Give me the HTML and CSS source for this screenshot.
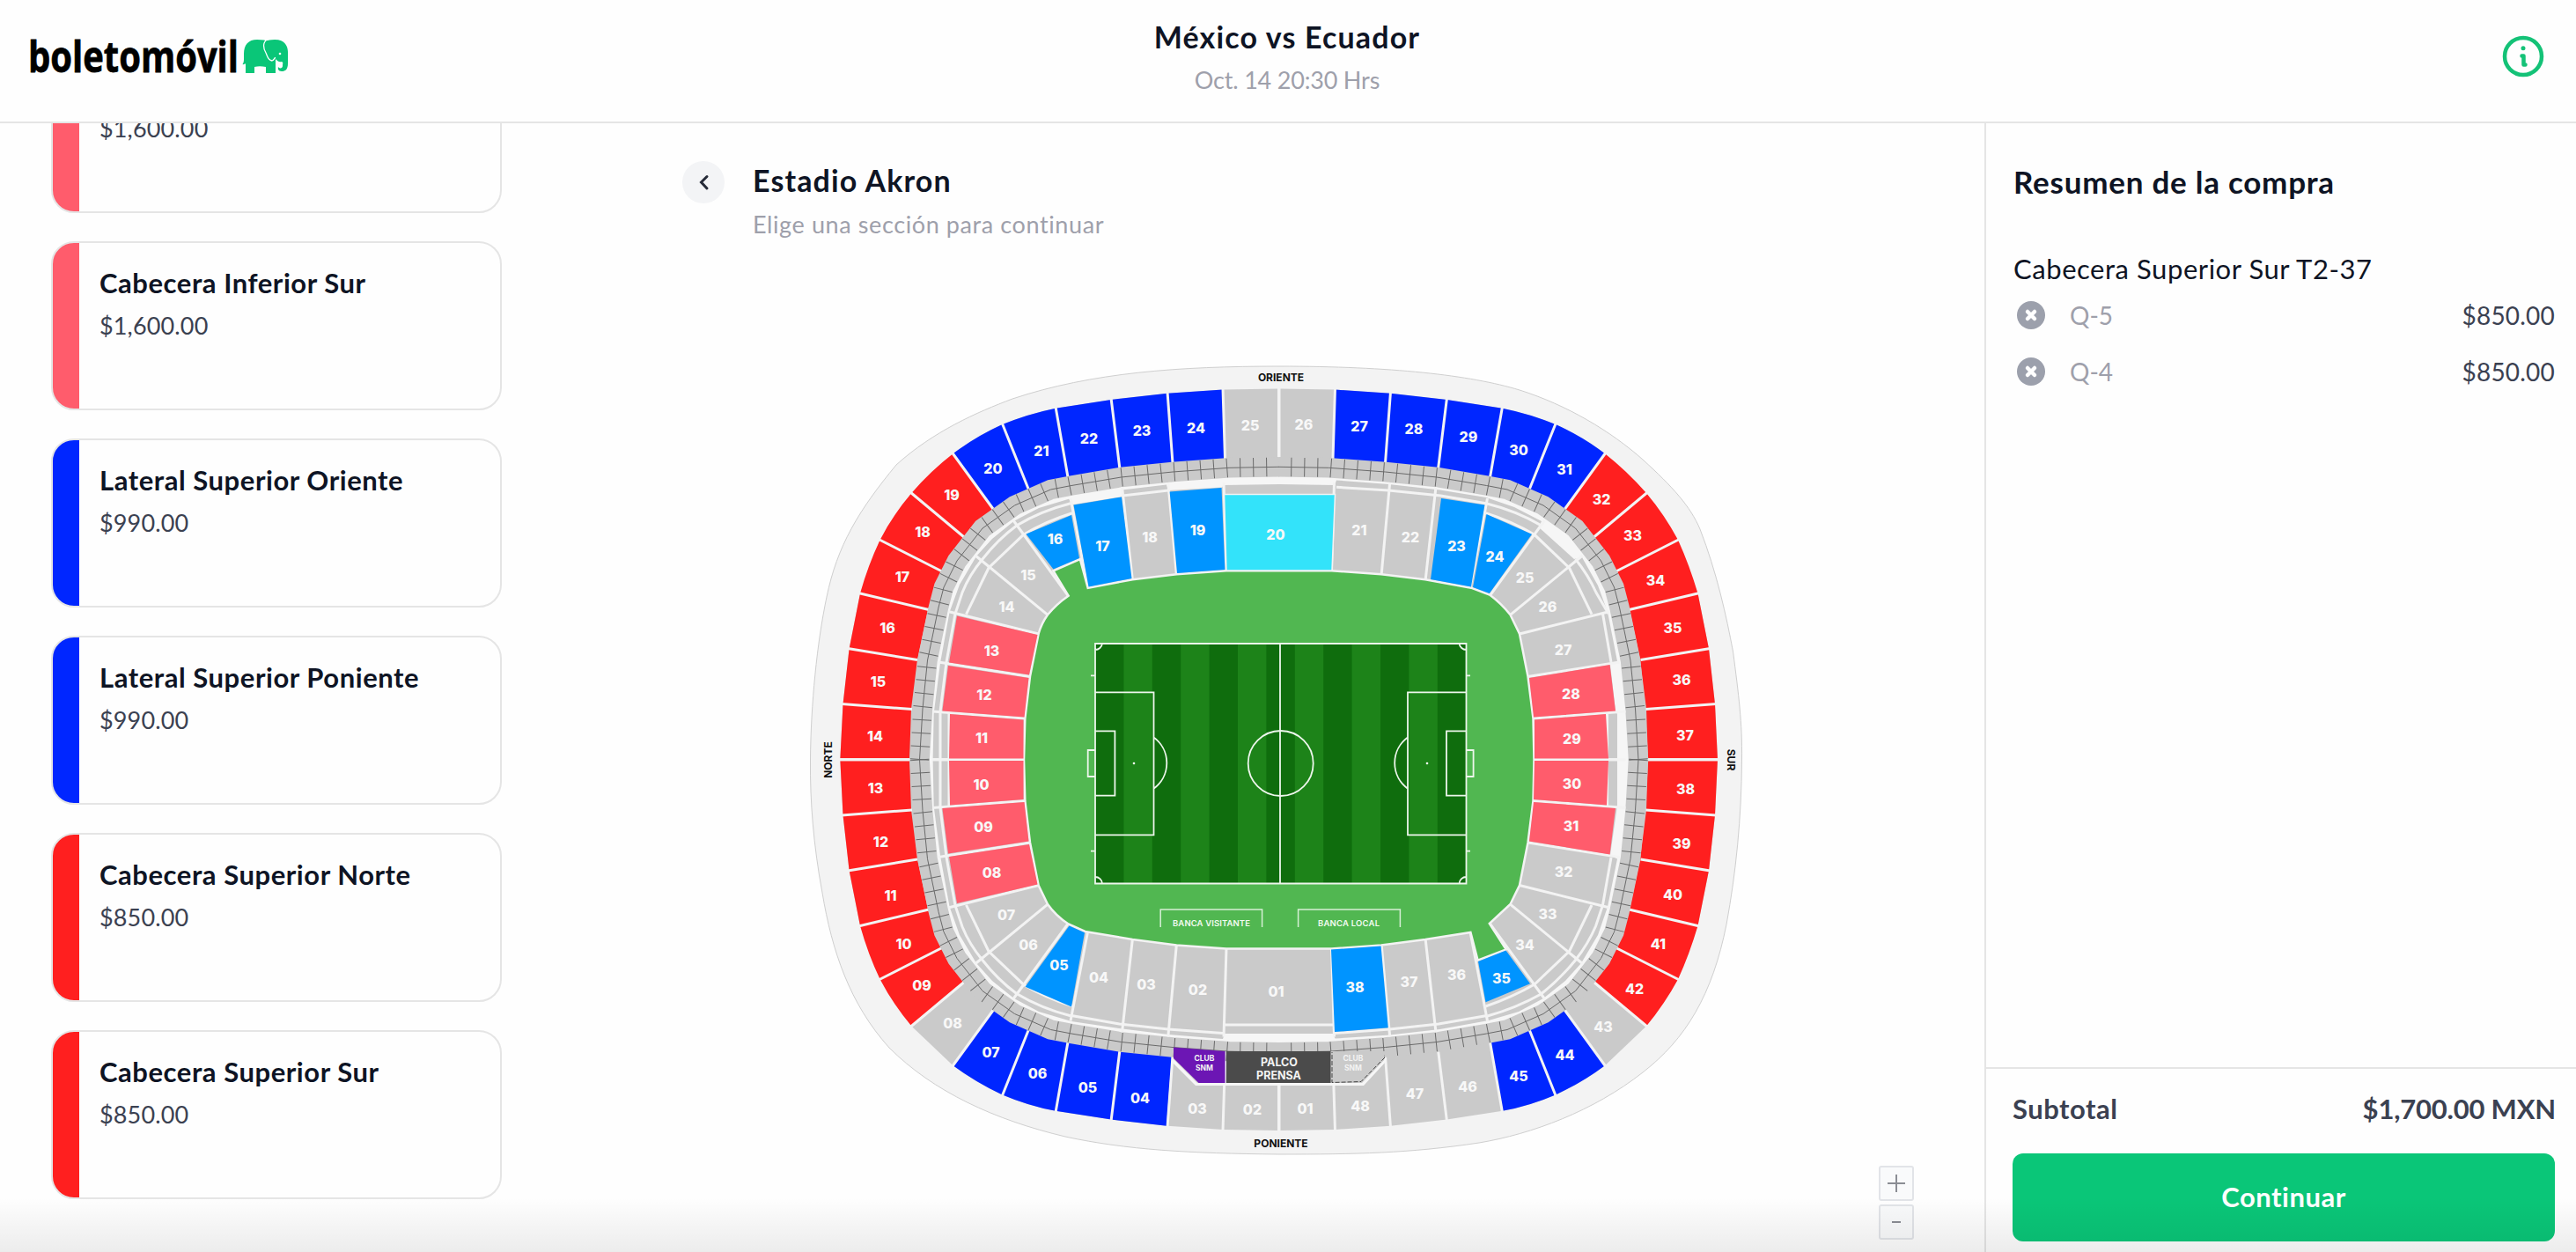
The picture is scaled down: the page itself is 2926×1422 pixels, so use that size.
FILE: index.html
```
<!DOCTYPE html>
<html lang="es">
<head>
    <meta charset="UTF-8">
    <title>México vs Ecuador | boletomóvil</title>
    <link rel="stylesheet" href="styles.css">
</head>
<body>
<header class="header">
    <a class="logo">
        <svg class="logo-svg" width="294" height="50" viewBox="34 38 294 50">
            <text class="logo-text" x="32" y="82" textLength="239" lengthAdjust="spacingAndGlyphs">boletomóvil</text>
            <!-- elefante -->
            <path fill="#0ac678" d="M275.500 73C277.500 71 277 66 277 61C277 51 282 45 292 45L300 45.500C303 47 305 45 312 45C324 45 327 53 327 59V72C327 79 324 81 320 81C316 81 315.500 78 316 76C317 78 321 78 321 75C321 72 322 71 320 70C317 71 315 69 313 67V83H302V76C297 75 293 75 289 76V83H279V73C278.500 71 277.500 74 275.500 73Z"/>
            <path fill="none" stroke="#fff" stroke-width="1.3" d="M303.500 45C298 48 299 55 302 60C304 64 304 68 309 69C312 68 311 66 313 65.500"/>
            <circle cx="318" cy="61" r="1.3" fill="#fff"/>
        </svg>
    </a>
    <div class="event">
        <h1 class="event-name">México vs Ecuador</h1>
        <p class="event-date">Oct. 14 20:30 Hrs</p>
    </div>
    <a class="info">
        <svg width="48" height="48" viewBox="0 0 48 48" fill="none" stroke="#14c277">
            <circle cx="24" cy="24" r="21" stroke-width="4.5"/>
            <path stroke-width="4.5" stroke-linecap="round" stroke-linejoin="round" d="M22.500 23.500H24.500V33.500H26.500"/>
            <circle cx="24" cy="14.700" r="2.500" fill="#14c277" stroke="none"/>
        </svg>
    </a>
</header>

<main class="content">
    <!-- zonas -->
    <aside class="zones">
        <div class="zone pink first"><p>$1,600.00</p></div>
        <div class="zone pink"><h3>Cabecera Inferior Sur</h3><p>$1,600.00</p></div>
        <div class="zone blue"><h3>Lateral Superior Oriente</h3><p>$990.00</p></div>
        <div class="zone blue"><h3>Lateral Superior Poniente</h3><p>$990.00</p></div>
        <div class="zone red"><h3>Cabecera Superior Norte</h3><p>$850.00</p></div>
        <div class="zone red"><h3>Cabecera Superior Sur</h3><p>$850.00</p></div>
    </aside>

    <!-- mapa -->
    <section class="venue">
        <div class="venue-head">
            <a class="back">
                <svg width="48" height="48" viewBox="0 0 48 48">
                    <circle cx="24" cy="24" r="24" fill="#f3f4f6"/>
                    <path d="M28 17.500L21.500 24L28 31" fill="none" stroke="#262b38" stroke-width="3" stroke-linecap="round"/>
                </svg>
            </a>
            <div>
                <h2 class="venue-name">Estadio Akron</h2>
                <p class="venue-hint">Elige una sección para continuar</p>
            </div>
        </div>

        <svg class="map" width="1080" height="910" viewBox="910 408 1080 910">
            <defs>
                <!-- un cuarto de las divisiones, se repite en espejo -->
                <g id="rows">
                    <path d="M1453 440V520M1389 441L1391.500 521M1326 445L1332 526M1262 452L1272 533M1199 462L1213 542M1138 480L1168 555M1081.500 514L1128 578M1034 559L1095 610M998 612.500L1070 649M975 673.500L1055 692.500M963 736.500L1042 749.500M956 799.500L1036 805.500M952 862.700H1034"/>
                </g>
                <g id="aisles">
                    <path d="M1390 548L1393 649M1326.800 548L1336.400 653M1274.500 553L1286.400 659M1216 566L1235.700 668M1151 591L1213.600 677M1108 631L1190 698.300M1077 694.500L1179.600 720M1066 752L1170 768.500M1059 808L1164.300 816M1059 862.700H1163"/>
                </g>
                <g id="corner">
                    <path d="M1068 863V808L1075 752L1085 697L1093 673Q1101 653 1116 635Q1133 613 1155 596.700Q1183 580 1216 571.700"/>
                    <path d="M1097.500 697.700L1123 645L1162.500 607.300Q1188 592 1218 582.700"/>
                </g>
                <path id="halfband" d="M1044.500 863L1048 805L1053.500 750L1066 690L1072 667L1087 637L1116 600L1152.500 574L1193.500 556L1217 551.500L1273.500 542L1332 536L1396 531.300L1453 530.300"/>
                <g id="band">
                    <use href="#halfband"/>
                    <use href="#halfband" transform="matrix(-1 0 0 1 2905.500 0)"/>
                    <use href="#halfband" transform="matrix(1 0 0 -1 0 1725.500)"/>
                    <use href="#halfband" transform="matrix(-1 0 0 -1 2905.500 1725.500)"/>
                </g>
            </defs>

            <!-- explanada -->
            <path class="shell" d="M920.500 863C921 800 928 730 939 678C951 620 975 580 1018 528C1060 490 1110 468 1150 453C1240 423 1340 416 1453 416C1580 416 1670 426 1726 443C1780 460 1830 490 1866 522C1900 553 1920 575 1931 601C1950 650 1961 700 1968.500 740C1975 790 1979 820 1978.500 863C1978 930 1972 990 1961 1050C1945 1130 1915 1180 1866 1218C1810 1262 1740 1288 1680 1298C1600 1310 1540 1311 1453 1311C1350 1310 1280 1306 1210 1291C1130 1272 1060 1240 1010 1190C965 1140 945 1080 934 1014C924 960 920 910 920.500 863Z"/>

            <!-- anillo superior -->
            <path class="off" d="M954.300 863L957.500 799.700L964.600 736.700L977 674L999.600 613.300L1035.400 560L1082.500 515.300Q1108 496 1138 482.300Q1168 470 1199 463.700L1262 454L1326 446.700L1389 442.500L1453 441.500L1516.500 442.500L1579.500 446.700L1643.500 454L1706.500 463.700Q1738 470 1767.500 482.300Q1798 496 1823 515.300L1870 560L1906 613.300L1928.500 674L1941 736.700L1948 799.700L1951 863L1948 925.800L1941 988.800L1928.500 1051.500L1906 1112.200L1870 1165.500L1823 1210.200Q1798 1229 1767.500 1243.200Q1738 1256 1706.500 1261.800L1643.500 1271.500L1579.500 1278.800L1516.500 1283L1453 1284L1389 1283L1326 1278.800L1262 1271.500L1199 1261.800Q1168 1256 1138 1243.200Q1108 1229 1082.500 1210.200L1035.400 1165.500L999.600 1112.200L977 1051.500L964.600 988.800L957.500 925.800Z"/>
            <path class="red" d="M1033 863H954.300L957.500 799.700L964.600 736.700L977 674Q986 642 999.600 613.300Q1014 585 1035.400 560Q1057 535 1082.500 515.300L1130 580L1095 609L1069 648L1054 692L1042 749L1035 805Z"/>
            <path class="red" d="M1872 863H1951L1948 799.700L1941 736.700L1928.500 674Q1919 642 1906 613.300Q1891 585 1870 560Q1848 535 1823 515.300L1776 580L1810 609L1836 648L1851 692L1863 749L1870 805Z"/>
            <path class="red" d="M1033 862H954.300L957.500 925.800L964.600 988.800L977 1051.500Q986 1084 999.600 1112.200Q1014 1140 1035.400 1165.500L1096 1115L1069 1077L1054 1033L1042 976L1035 920Z"/>
            <path class="red" d="M1872 862H1951L1948 925.800L1941 988.800L1928.500 1051.500Q1919 1084 1906 1112.200Q1891 1140 1870 1165.500L1809 1115L1836 1077L1851 1033L1863 976L1870 920Z"/>
            <path class="blue" d="M1082.500 515.300Q1108 496 1138 482.300Q1168 470 1199 463.700L1262 454L1326 446.700L1389 442.500L1391.500 522L1213 545L1130 580Z"/>
            <path class="blue" d="M1823 515.300Q1798 496 1767.500 482.300Q1738 470 1706.500 463.700L1643.500 454L1579.500 446.700L1516.500 442.500L1514 522L1692 545L1776 580Z"/>
            <path class="blue" d="M1082.500 1210.200Q1108 1229 1138 1243.200Q1168 1256 1199 1261.800L1262 1271.500L1325 1278.800L1331 1199L1213 1181L1130 1146Z"/>
            <path class="blue" d="M1823 1210.200Q1798 1229 1767.500 1243.200Q1738 1256 1706.500 1261.800L1692.500 1181L1776 1146Z"/>
            <g class="gap">
                <use href="#rows"/>
                <use href="#rows" transform="matrix(-1 0 0 1 2905.500 0)"/>
                <use href="#rows" transform="matrix(1 0 0 -1 0 1725.500)"/>
                <use href="#rows" transform="matrix(-1 0 0 -1 2905.500 1725.500)"/>
            </g>

            <!-- palcos -->
            <path fill="#f6f6f6" d="M1044.500 863L1048 805L1053.500 750L1066 690L1087 637L1116 600L1152.500 574L1193.500 556L1332 536L1453 530L1573.500 536L1712 556L1753 574L1789.500 600L1818.500 637L1839.500 690L1852 750L1857.500 805L1861 863L1857.500 920L1852 975L1839.500 1035L1818.500 1088L1789.500 1125L1753 1151L1712 1169L1573.500 1189L1453 1195L1332 1189L1193.500 1169L1152.500 1151L1116 1125L1087 1088L1066 1035L1053.500 975L1048 920Z"/>
            <use href="#band" class="band"/>
            <use href="#band" class="band-ticks"/>
            <use href="#band" class="band-mid"/>

            <!-- anillo inferior -->
            <path class="off" d="M1059.600 863L1060.700 810L1068 753L1078.600 695L1090 664L1109 631.700L1127 612L1151.800 591.700L1180 577L1214 566.700L1219 573L1274.500 564V556.500L1325 550.500L1327 557L1388 553.500L1390 551L1453 550L1516 551L1518 545.500L1577.500 550L1635.500 556.500L1688 565L1720 576L1751 592L1748 599L1788 635L1797 633L1815 665L1826 695L1837 751L1829 755L1835 807L1837 811V915L1829 971L1837 975.500L1826 1030L1815 1062L1796 1094L1778 1114L1753 1134L1725 1149L1691 1159L1635.500 1169L1578.500 1175.500L1516.500 1179.500L1514 1174H1391L1389 1180L1327.500 1175L1271 1168L1217 1160L1180 1149L1151.800 1134L1127 1114L1109 1094L1090 1062L1078.600 1030L1068 972L1060.700 916Z"/>
            <g class="gap">
                <use href="#aisles"/>
                <use href="#aisles" transform="matrix(-1 0 0 1 2905.500 0)"/>
                <use href="#aisles" transform="matrix(1 0 0 -1 0 1725.500)"/>
                <use href="#aisles" transform="matrix(-1 0 0 -1 2905.500 1725.500)"/>
                <use href="#corner"/>
                <use href="#corner" transform="matrix(1 0 0 -1 0 1725.500)"/>
                <path d="M1827 697L1813 673Q1804 653 1789.500 635M1750.500 596.700Q1722 580 1688 571.700M1808 697.700L1782.500 645L1743 607.300Q1717 592 1687.500 582.700M1820.500 697L1830 752M1825.500 811V915M1830 974L1820.500 1028L1812.500 1052Q1804 1072 1789.500 1090.500Q1772 1112 1750.500 1129Q1722 1145 1689.500 1154M1808 1028L1782.500 1080.500L1743 1118Q1717 1133 1687.500 1143"/>
                <path d="M1078 810V915M1518 553.300L1577.500 557L1636.500 563L1688 571.700M1275 563L1327 557M1217 1153.500L1271.500 1163L1327 1169L1389 1173.500M1689 1153.500L1634 1163L1578.500 1169L1516 1173.500M1391 1164H1514"/>
            </g>

            <path class="grass" d="M1163 863L1164.300 816L1170 768.300L1179.600 720Q1183 708 1190 698.300Q1200 686 1213.600 676.700L1196.400 648.300L1226.800 635L1235.700 667.700L1286.400 658.300L1336.400 652.300L1393 648.300H1512.500L1569 652.300L1619 658.300L1671 667.700L1692 675.500Q1705 685 1715.500 698.300L1726 720L1735.500 768.300L1741.500 816L1742.500 863L1741.500 909.500L1735.500 957L1726 1005.500L1715.500 1027L1691.800 1049L1710.700 1078.300L1678.600 1090.700L1670.400 1059L1619 1067L1569 1073.500L1512.500 1077.500H1393L1336.400 1073.500L1286.400 1067L1232.500 1058L1213.600 1049.500Q1199 1040 1190 1027L1179.600 1005.500L1170 957L1164.300 909.500Z"/>

            <path class="pink" d="M1087 699.500L1178.500 721L1169 766.500L1078 752.500ZM1077 756L1168.500 770L1163.500 814.500L1070.400 807.500ZM1079 811L1162.500 817.500V861.500H1078Z"/>
            <path class="pink" d="M1087 1026L1178.500 1004.500L1169 959L1078 973ZM1077 969.500L1168.500 955.500L1163.500 911L1070.400 918ZM1079 914.500L1162.500 908V864H1078Z"/>
            <path class="pink" d="M1828.600 755L1737 770L1742 814.500L1835 807.500ZM1824 811L1743 817.500V861.500H1827ZM1827 864H1743L1742 908L1825 914.500ZM1835 918L1742 911L1737 955.500L1828.600 970.500Z"/>
            <path class="sky" d="M1165.500 606.500L1217 585L1226 634L1196.500 646.500ZM1219.500 573.500L1274 564.500L1285.500 657L1236.500 666.500ZM1328.600 558.500L1387.500 554L1391.400 647L1337 651ZM1637 566L1686.400 573.500L1671 666.500L1625 658ZM1688.500 584L1740 606.700L1691.800 674L1673 667Z"/>
            <path class="sky" d="M1512 1078.500L1568.600 1074.500L1576.800 1167.300L1516 1172ZM1679 1092L1710.500 1079.500L1738 1117.300L1687.500 1138.300ZM1214.500 1051.500L1232 1059.300L1217 1143.500L1164.500 1120.700Z"/>
            <path fill="#33e3fa" stroke="#f3f3f3" stroke-width="1.5" d="M1390.500 561.500H1516.500L1513 648H1393Z"/>

            <!-- club y prensa -->
            <path class="off" d="M1390 1194H1574L1572 1201L1546 1229L1512 1230Z"/>
            <path fill="#f6f6f6" d="M1331 1201L1360 1230H1547L1574 1202V1206L1549 1233H1358L1331 1206Z"/>
            <path fill="none" stroke="#444" stroke-dasharray="5 2" d="M1573 1201L1546 1228.500L1513 1229.500V1195"/>
            <path fill="#6c16b4" d="M1333 1189.500L1391.500 1194V1230H1361.500L1333 1202Z"/>
            <path fill="#4b4b4b" d="M1393 1194H1511.500V1230H1393Z"/>

            <!-- cancha -->
            <path fill="#0f6d0d" d="M1244 731H1665.500V1003.500H1244Z"/>
            <path fill="#1d8319" d="M1276.400 731h32.400v272.500h-32.400zM1341.200 731h32.400v272.500h-32.400zM1406 731h32.400v272.500h-32.400zM1470.800 731h32.400v272.500h-32.400zM1535.600 731h32.400v272.500h-32.400zM1600.400 731h32.400v272.500h-32.400z"/>
            <path class="chalk" d="M1244 731H1665.500V1003.500H1244ZM1454 731V1003.500M1244 786.300H1310.500V948.300H1244M1244 830.300H1266.400V903.700H1244M1244 852H1235.700V882H1244M1665.500 786.300H1599V948.300H1665.500M1665.500 830.300H1643V903.700H1665.500M1665.500 852H1673.600V882H1665.500M1310.500 837.500A36 36 0 0 1 1310.500 895.700M1599 837.500A36 36 0 0 0 1599 895.700M1239 767.300H1244M1239 966.700H1244M1665.500 767.300H1670M1665.500 966.700H1670M1252 731A8 8 0 0 1 1244 738M1657.500 731A8 8 0 0 0 1665.500 738M1252 1003.500A8 8 0 0 0 1244 996M1657.500 1003.500A8 8 0 0 1 1665.500 996"/>
            <circle class="chalk" cx="1454.700" cy="867" r="37"/>
            <circle cx="1288" cy="867" r="1.300" fill="#fff"/>
            <circle cx="1621" cy="867" r="1.300" fill="#fff"/>
            <path class="bench" d="M1318.200 1053V1033H1433.600V1053M1474.600 1053V1033H1590.400V1053"/>

            <g class="bench-text">
                <text x="1376" y="1051.500" textLength="88">BANCA VISITANTE</text>
                <text x="1532" y="1051.500" textLength="70">BANCA LOCAL</text>
            </g>
            <g class="side">
                <text x="1455" y="433">ORIENTE</text>
                <text x="1455" y="1302.500">PONIENTE</text>
                <text transform="translate(945 863) rotate(-90)">NORTE</text>
                <text transform="translate(1962 863) rotate(90)">SUR</text>
            </g>
            <g class="club">
                <text x="1368" y="1204.700">CLUB</text><text x="1368" y="1215.700">SNM</text>
                <text x="1537" y="1204.700">CLUB</text><text x="1537" y="1215.700">SNM</text>
            </g>
            <g class="press">
                <text x="1453" y="1210.500">PALCO</text><text x="1452.500" y="1226">PRENSA</text>
            </g>

            <!-- números, anillo superior -->
            <g class="num" transform="translate(0 5.500)">
                <text x="994" y="836">14</text><text x="997.500" y="774">15</text><text x="1008" y="713">16</text>
                <text x="1025" y="655">17</text><text x="1048" y="604">18</text><text x="1081" y="562">19</text>
                <text x="1128" y="532">20</text><text x="1183" y="512">21</text><text x="1237" y="498.500">22</text>
                <text x="1297" y="489.500">23</text><text x="1358.500" y="486">24</text><text x="1420" y="483">25</text>
                <text x="1481" y="482">26</text><text x="1544" y="484">27</text><text x="1606" y="487.500">28</text>
                <text x="1668" y="496">29</text><text x="1725" y="511">30</text><text x="1777" y="533.500">31</text>
                <text x="1819" y="567.500">32</text><text x="1854.500" y="608.500">33</text><text x="1880.500" y="659.500">34</text>
                <text x="1900" y="713">35</text><text x="1910" y="772.500">36</text><text x="1914" y="835.500">37</text>
                <text x="1914.500" y="896">38</text><text x="1910" y="958.500">39</text><text x="1900" y="1016">40</text>
                <text x="1883.500" y="1072.500">41</text><text x="1856.500" y="1123.500">42</text><text x="1821" y="1166">43</text>
                <text x="1777.500" y="1198.500">44</text><text x="1725" y="1222">45</text><text x="1667" y="1234.500">46</text>
                <text x="1607" y="1242.500">47</text><text x="1545" y="1256.500">48</text><text x="1482.500" y="1259">01</text>
                <text x="1422.500" y="1260.500">02</text><text x="1360" y="1259.500">03</text><text x="1295" y="1247">04</text>
                <text x="1235.500" y="1235.500">05</text><text x="1178.500" y="1219">06</text><text x="1125.500" y="1195.500">07</text>
                <text x="1082" y="1162.500">08</text><text x="1047" y="1119.500">09</text><text x="1026.500" y="1072.500">10</text>
                <text x="1011.500" y="1017.500">11</text><text x="1000.500" y="956">12</text><text x="994.500" y="895.500">13</text>
            </g>
            <!-- números, anillo inferior -->
            <g class="num" transform="translate(0 5.500)">
                <text x="1198.500" y="612">16</text><text x="1252.500" y="620">17</text><text x="1306" y="610">18</text>
                <text x="1360.500" y="602.500">19</text><text x="1449" y="607">20</text><text x="1544" y="602.500">21</text>
                <text x="1602" y="610.500">22</text><text x="1654.500" y="620">23</text><text x="1698" y="632.500">24</text>
                <text x="1732" y="656.500">25</text><text x="1758" y="689">26</text><text x="1775.500" y="738.500">27</text>
                <text x="1784.500" y="788.500">28</text><text x="1785.500" y="839">29</text><text x="1785.500" y="890.500">30</text>
                <text x="1784.500" y="938.500">31</text><text x="1776" y="990.500">32</text><text x="1758" y="1038.500">33</text>
                <text x="1732" y="1073.500">34</text><text x="1705.500" y="1111.500">35</text><text x="1654.500" y="1107.500">36</text>
                <text x="1600.500" y="1115.500">37</text><text x="1539" y="1121">38</text><text x="1449.500" y="1126.500">01</text>
                <text x="1360.500" y="1124">02</text><text x="1302" y="1118.500">03</text><text x="1248" y="1110.500">04</text>
                <text x="1203" y="1096.500">05</text><text x="1168" y="1073.500">06</text><text x="1143" y="1039.500">07</text>
                <text x="1126.500" y="991.500">08</text><text x="1117" y="939.500">09</text><text x="1114.500" y="891.500">10</text>
                <text x="1115" y="838.500">11</text><text x="1118" y="789.500">12</text><text x="1126.500" y="739">13</text>
                <text x="1143.500" y="689">14</text><text x="1168" y="653.500">15</text>
            </g>
        </svg>

        <div class="zoom">
            <button><svg width="22" height="22" viewBox="0 0 22 22"><path d="M1 11H21M11 1V21" stroke="#8b8d94" stroke-width="2"/></svg></button>
            <button><svg width="22" height="22" viewBox="0 0 22 22"><path d="M6 11H16" stroke="#8b8d94" stroke-width="2"/></svg></button>
        </div>
    </section>

    <!-- resumen -->
    <aside class="summary">
        <div class="summary-body">
            <h2 class="summary-title">Resumen de la compra</h2>
            <p class="summary-section">Cabecera Superior Sur T2-37</p>
            <div class="seat">
                <svg width="32" height="32" viewBox="0 0 32 32"><circle cx="16" cy="16" r="16" fill="#9ca0ac"/><path d="M12 12L20 20M20 12L12 20" stroke="#fff" stroke-width="4.500" stroke-linecap="round"/></svg>
                <span class="seat-name">Q-5</span>
                <span class="seat-price">$850.00</span>
            </div>
            <div class="seat">
                <svg width="32" height="32" viewBox="0 0 32 32"><circle cx="16" cy="16" r="16" fill="#9ca0ac"/><path d="M12 12L20 20M20 12L12 20" stroke="#fff" stroke-width="4.500" stroke-linecap="round"/></svg>
                <span class="seat-name">Q-4</span>
                <span class="seat-price">$850.00</span>
            </div>
        </div>
        <div class="summary-foot">
            <div class="subtotal"><span>Subtotal</span><span class="total">$1,700.00 MXN</span></div>
            <button class="continue">Continuar</button>
        </div>
    </aside>
</main>
<div class="shade"></div>
</body>
</html>
```
FILE: styles.css
```
* {
    margin: 0;
    padding: 0;
    box-sizing: border-box;
}

body {
    width: 2926px;
    height: 1422px;
    overflow: hidden;
    background: #fefefe;
    font-family: Lato, "Open Sans", sans-serif;
    color: #0e1424;
}

h1, h2, h3, p, span {
    white-space: nowrap;
}

/* header */
.header {
    height: 140px;
    border-bottom: 2px solid #e5e5e5;
    display: grid;
    grid-template-columns: 1fr auto 1fr;
    padding: 0 36px 0 34px;
}

.logo {
    padding-top: 38px;
}

.logo-svg {
    display: block;
    overflow: visible;
}

.logo-text {
    font: 700 49px "Open Sans", sans-serif;
    fill: #000;
    stroke: #000;
    stroke-width: 0.8px;
}

.event {
    text-align: center;
    padding-top: 20px;
}

.event-name {
    font-size: 34px;
    line-height: 44px;
    font-weight: 700;
    letter-spacing: 1.15px;
}

.event-date {
    font-size: 27px;
    line-height: 32px;
    margin-top: 11px;
    letter-spacing: -0.2px;
    color: #9ea0ab;
}

.info {
    justify-self: end;
    padding-top: 40px;
}

/* content */
.content {
    height: 1282px;
    display: grid;
    grid-template-columns: 570px 1fr 672px;
}

.zones {
    height: 1282px;
    overflow: hidden;
    padding-left: 58px;
    display: flex;
    flex-direction: column;
    justify-content: flex-end;
    gap: 32px;
    padding-bottom: 60px;
}

.zone {
    flex: none;
    height: 192px;
    border: 2px solid #e5e5e5;
    border-radius: 26px;
    overflow: hidden;
    padding: 26px 0 0 53px;
    background: linear-gradient(currentColor, currentColor) left / 30px 100% no-repeat;
}

.zone.first {
    padding-top: 64px;
}

.zone.pink {
    color: #ff5c6c;
}

.zone.blue {
    color: #0026ff;
}

.zone.red {
    color: #ff1f1f;
}

.zone h3 {
    font-size: 31px;
    line-height: 38px;
    letter-spacing: 0.55px;
    color: #0e1424;
}

.zone p {
    font-size: 27px;
    line-height: 34px;
    margin-top: 13px;
    letter-spacing: 0.15px;
    color: #3b4151;
}

/* map */
.venue {
    position: relative;
}

.venue-head {
    display: flex;
    gap: 32px;
    padding: 43px 0 0 205px;
    height: 268px;
}

.venue-name {
    font-size: 34px;
    line-height: 44px;
    letter-spacing: 1.1px;
}

.venue-hint {
    font-size: 27px;
    line-height: 34px;
    margin-top: 11px;
    letter-spacing: 0.6px;
    color: #9ea0ab;
}

.map {
    display: block;
    margin-left: 340px;
}

.map text {
    text-anchor: middle;
    font-family: Inter, "Open Sans", sans-serif;
    font-weight: 700;
}

.shell {
    fill: #f3f3f3;
    stroke: #cfcfcf;
}

.off {
    fill: #cacaca;
}

.map .red {
    fill: #ff1f1f;
}

.map .blue {
    fill: #0026ff;
}

.map .pink {
    fill: #ff5c6c;
}

.sky {
    fill: #0094ff;
}

.gap {
    fill: none;
    stroke: #f3f3f3;
    stroke-width: 3;
}

.band {
    fill: none;
    stroke: #cacaca;
    stroke-width: 22.5;
}

.band-ticks {
    fill: none;
    stroke: #6a6a6a;
    stroke-width: 21.5;
    stroke-dasharray: 1 14;
}

.band-mid {
    fill: none;
    stroke: #6a6a6a;
    stroke-width: 1;
}

.grass {
    fill: #51b751;
    stroke: #f3f3f3;
    stroke-width: 2.5;
}

.chalk {
    fill: none;
    stroke: #edf6ec;
    stroke-width: 1.8;
}

.bench {
    fill: none;
    stroke: #d6efd5;
    stroke-width: 1.5;
}

.map .bench-text text {
    font-size: 9.5px;
    font-weight: 600;
    fill: #f3fbf2;
}

.side text {
    font-size: 12px;
    fill: #111;
}

.club text {
    font-size: 8.5px;
    fill: #f3f3f3;
}

.press text {
    font-size: 12.5px;
    fill: #f3f3f3;
}

.map .num text {
    font-size: 16px;
    font-weight: 800;
    fill: #f8f8f8;
}

.zoom {
    position: absolute;
    right: 80px;
    bottom: 14px;
    display: flex;
    flex-direction: column;
    gap: 4px;
}

.zoom button {
    width: 40px;
    height: 40px;
    border: 2px solid #e2e4e8;
    border-radius: 3px;
    background: #f9fafb;
    display: flex;
    align-items: center;
    justify-content: center;
}

/* summary */
.summary {
    border-left: 2px solid #e5e5e5;
    display: flex;
    flex-direction: column;
}

.summary-body {
    flex: 1;
    padding: 44px 24px 0 31px;
}

.summary-title {
    font-size: 35px;
    line-height: 44px;
    letter-spacing: 0.75px;
}

.summary-section {
    font-size: 31px;
    line-height: 40px;
    letter-spacing: 0.55px;
    margin: 57px 0 17px;
}

.seat {
    display: flex;
    align-items: center;
    height: 32px;
    margin-bottom: 32px;
    padding-left: 4px;
    font-size: 28px;
}

.seat-name {
    margin-left: 28px;
    color: #9ea0ab;
}

.seat-price {
    margin-left: auto;
    letter-spacing: 0.2px;
    color: #3b4151;
}

.summary-foot {
    height: 210px;
    border-top: 2px solid #e5e5e5;
    padding: 26px 23px 0 30px;
}

.subtotal {
    display: flex;
    justify-content: space-between;
    font-size: 31px;
    line-height: 38px;
    font-weight: 700;
    letter-spacing: 0.5px;
    color: #3b4151;
}

.subtotal .total {
    letter-spacing: -0.2px;
}

.continue {
    display: block;
    width: 616px;
    height: 100px;
    margin-top: 32px;
    padding-bottom: 3px;
    border: 0;
    border-radius: 12px;
    background: #0ac678;
    color: #fff;
    font: 700 31px Lato, sans-serif;
    letter-spacing: 0.5px;
}

/* bottom shade */
.shade {
    position: absolute;
    left: 0;
    top: 1360px;
    width: 2926px;
    height: 62px;
    background: linear-gradient(rgba(0, 0, 0, 0), rgba(0, 0, 0, 0.07));
}
```
